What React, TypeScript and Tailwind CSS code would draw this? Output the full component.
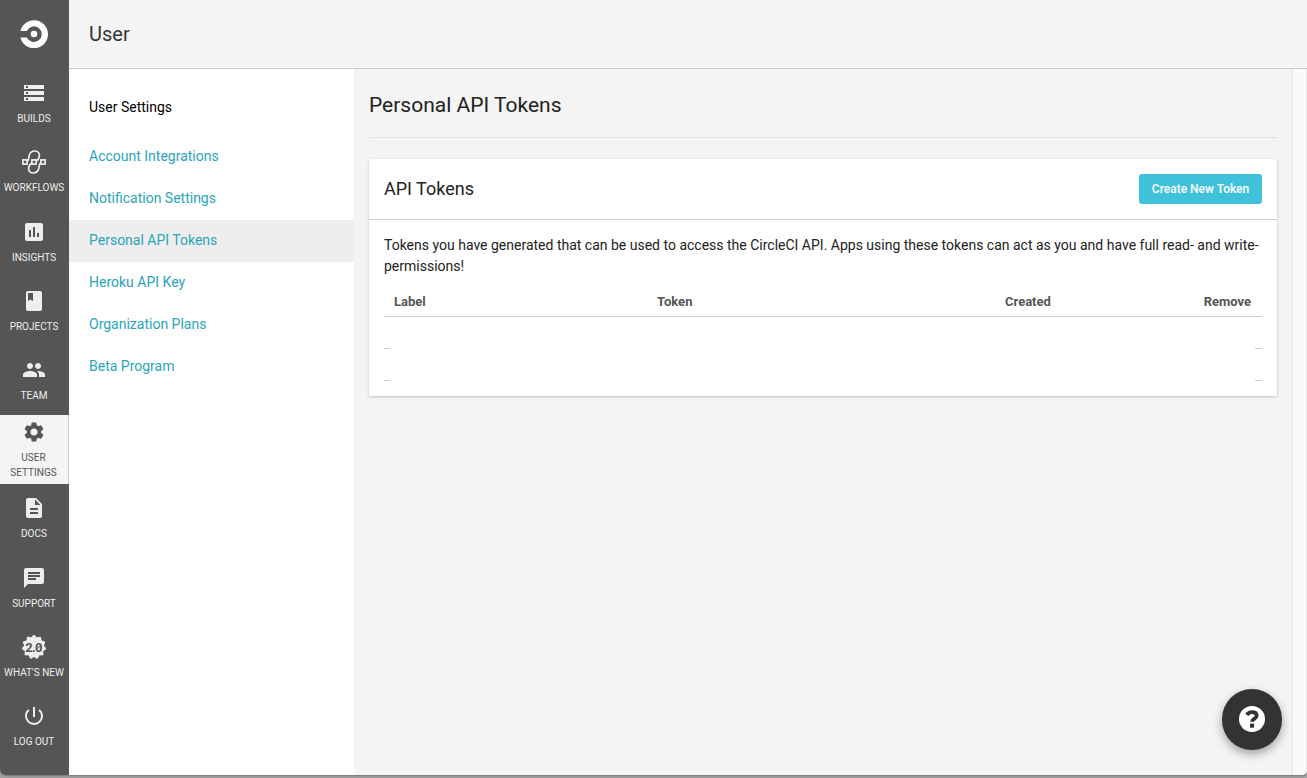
import React from 'react';
import { MdStorage, MdInsertChart, MdBook, MdPeople, MdSettings, MdDescription, MdChat, MdPowerSettingsNew } from 'react-icons/md';

function Logo() {
  return (
    <svg width="28" height="28" viewBox="0 0 28 28">
      <circle cx="14" cy="14" r="3.3" fill="#fff" />
      <path fill="#fff" d="M.4 11A14 14 0 1 1 .4 17.4H6.8A7.8 7.8 0 1 0 6.8 11Z" />
    </svg>
  );
}

function WorkflowIcon() {
  return (
    <svg width="24" height="24" viewBox="0 0 24 24" fill="none" stroke="currentColor" strokeWidth="1.7">
      <rect x="0.9" y="9.9" width="4.2" height="4.2" />
      <rect x="9.9" y="9.9" width="4.2" height="4.2" />
      <rect x="18.9" y="9.9" width="4.2" height="4.2" />
      <path d="M5 11.200C7.200 10.800 6.400 8 7.200 5.400C8 2.500 10 1 12.800 1C15.900 1 17.900 3.400 17.300 6.200C16.700 8.600 16.500 10.200 14.200 11" />
      <path d="M19 12.800C16.800 13.200 17.600 16 16.800 18.600C16 21.500 14 23 11.200 23C8.100 23 6.100 20.600 6.700 17.800C7.300 15.400 7.500 13.800 9.800 13" />
    </svg>
  );
}

function NewIcon() {
  const points = Array.from({ length: 132 }, (_, i) => {
    const a = (i / 132) * Math.PI * 2;
    const r = 11.1 + 1 * Math.cos(11 * a);
    return `${12 + r * Math.sin(a)},${12 - r * Math.cos(a)}`;
  }).join(' ');
  return (
    <svg width="24" height="24" viewBox="0 0 24 24" className="overflow-visible font-['Roboto',sans-serif]">
      <polygon points={points} fill="currentColor" />
      <text x="3.2 9.900 13.100" y="16.800" fontSize="13" fontWeight="700" fill="#555">2.0</text>
      <path d="M15.800 13.600l2.200-3" stroke="#555" strokeWidth="1" />
    </svg>
  );
}

function HelpIcon() {
  return (
    <svg width="26" height="26" viewBox="0 0 26 26">
      <circle cx="13" cy="13" r="13" fill="#fff" />
      <path d="M7.900 9C9 7.100 10.600 6.200 13 6.200C15.900 6.200 17.700 7.600 17.700 9.700C17.700 12.600 13 12.500 13 15.800" fill="none" stroke="#333" strokeWidth="3.8" />
      <rect x="11" y="17.600" width="4.100" height="4.100" fill="#333" />
    </svg>
  );
}

const nav = [
  { label: 'BUILDS', icon: <MdStorage size={24} /> },
  { label: 'WORKFLOWS', icon: <WorkflowIcon /> },
  { label: 'INSIGHTS', icon: <MdInsertChart size={24} /> },
  { label: 'PROJECTS', icon: <MdBook size={24} /> },
  { label: 'TEAM', icon: <MdPeople size={24} /> },
  { label: 'USER SETTINGS', icon: <MdSettings size={24} />, active: true },
  { label: 'DOCS', icon: <MdDescription size={24} /> },
  { label: 'SUPPORT', icon: <MdChat size={24} /> },
  { label: "WHAT'S NEW", icon: <NewIcon /> },
  { label: 'LOG OUT', icon: <MdPowerSettingsNew size={24} /> },
];

const links = ['Account Integrations', 'Notification Settings', 'Personal API Tokens', 'Heroku API Key', 'Organization Plans', 'Beta Program'];

export default function App() {
  return (
    <div className="h-[778px] w-[1307px] overflow-hidden bg-[#a3a3a3] font-['Roboto',sans-serif]">
      <div className="flex h-[775px] overflow-hidden rounded-b-[5px] bg-[#f4f4f4] shadow-[0_1px_2px_#777]">
        <nav className="flex w-[69px] shrink-0 flex-col bg-[#555]">
          <div className="flex h-[69.2px] shrink-0 items-start justify-center pr-px pt-5"><Logo /></div>
          {nav.map((n) => (
            <a
              key={n.label}
              className={
                n.active
                  ? 'flex h-[69.2px] shrink-0 flex-col items-center border-r border-[#ccc] bg-[#f4f4f4] pl-2 pr-[9px] pt-[5px] text-[#555]'
                  : 'flex h-[69.2px] shrink-0 flex-col items-center pr-px pt-3 text-[#eee]'
              }
            >
              {n.icon}
              <span className={n.active ? 'mt-[6px] text-center text-[10px] leading-[15px]' : 'mt-[6px] whitespace-nowrap text-[10px] leading-[15px]'}>{n.label}</span>
            </a>
          ))}
        </nav>
        <div className="flex min-w-0 flex-1 flex-col">
          <header className="flex h-[69px] shrink-0 items-center border-b border-[#ccc] px-5 text-xl text-[#343434]">User</header>
          <div className="flex flex-1">
            <aside className="w-[285px] shrink-0 bg-white pt-[18px]">
              <h2 className="flex h-[42px] items-center px-5 pb-0.5 text-sm text-black">User Settings</h2>
              <ul className="mt-[7px]">
                {links.map((l) => (
                  <li key={l} className={l === 'Personal API Tokens' ? 'flex h-[42px] items-center bg-[#eee] px-5 pb-0.5 text-sm text-[#2aa5bb]' : 'flex h-[42px] items-center px-5 pb-0.5 text-sm text-[#2aa5bb]'}>{l}</li>
                ))}
              </ul>
            </aside>
            <main className="min-w-0 flex-1 px-[15px]">
              <h1 className="flex h-[69px] items-center border-b border-[#e3e3e3] pt-1.5 text-[21px] text-[#222]">Personal API Tokens</h1>
              <section className="mt-[21px] h-[237px] rounded-[1px] bg-white shadow-[0_1px_3px_rgba(0,0,0,0.22)]">
                <div className="flex h-[61px] items-center justify-between border-b border-[#ccc] px-[15px]">
                  <h3 className="text-lg text-[#222]">API Tokens</h3>
                  <button className="h-[30px] w-[123px] rounded-[3px] bg-[#3fc1da] text-xs font-medium text-white">Create New Token</button>
                </div>
                <div className="px-[15px] pt-[15px] text-[#222]">
                  <p className="text-sm leading-[21px]">Tokens you have generated that can be used to access the CircleCI API. Apps using these tokens can act as you and have full read- and write-permissions!</p>
                  <div className="mt-[10px] flex h-[30px] items-center border-b border-[#ccc] text-[13px] font-bold text-[#555]">
                    <span className="w-[263px] pl-[10px]">Label</span>
                    <span className="w-[348px] pl-[10px]">Token</span>
                    <span className="flex-1 pl-[10px]">Created</span>
                    <span className="pr-[11px]">Remove</span>
                  </div>
                  <div className="mt-[31px] flex justify-between"><i className="h-px w-1.5 bg-[#ccc]" /><i className="h-px w-[7px] bg-[#ccc]" /></div>
                  <div className="mt-[31px] flex justify-between"><i className="h-px w-1.5 bg-[#ccc]" /><i className="h-px w-[7px] bg-[#ccc]" /></div>
                </div>
              </section>
            </main>
            <div className="w-[15px] shrink-0 border-x border-[#e8e8e8] bg-[#fafafa]" />
          </div>
        </div>
      </div>
      <button className="fixed left-[1222px] top-[689px] flex h-[61px] w-[60px] items-center justify-center rounded-full bg-[#333] pb-px text-white shadow-[0_4px_10px_rgba(0,0,0,0.35)]">
        <HelpIcon />
      </button>
    </div>
  );
}
